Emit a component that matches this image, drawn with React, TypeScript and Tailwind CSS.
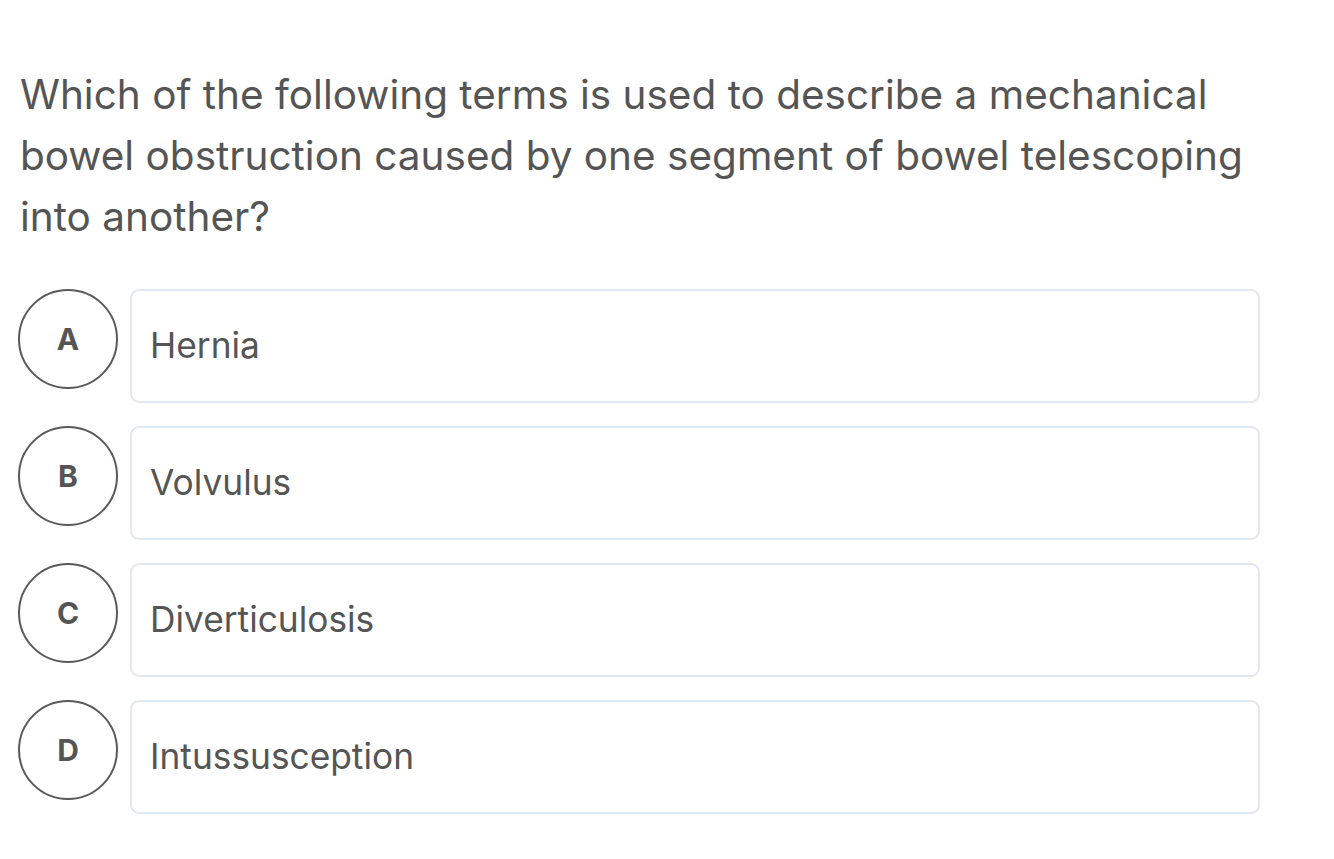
const options = [
  { letter: "A", text: "Hernia" },
  { letter: "B", text: "Volvulus" },
  { letter: "C", text: "Diverticulosis" },
  { letter: "D", text: "Intussusception" },
];

export default function App() {
  return (
    <div className="min-h-[859px] w-[1334px] bg-white font-['Inter',sans-serif] text-[#555555]">
      <div className="pl-[18px] pr-[74px] pt-[64px]">
        <p className="pl-[2px] text-[40.5px] leading-[61px]">
          Which of the following terms is used to describe a mechanical bowel
          obstruction caused by one segment of bowel telescoping into another?
        </p>
        <div className="mt-[42px] flex flex-col gap-[23px]">
          {options.map((o) => (
            <div key={o.letter} className="flex items-start gap-[12px]">
              <div className="flex h-[100px] w-[100px] shrink-0 items-center justify-center rounded-full border-2 border-[#5a5a5a] text-[30px] font-bold text-[#555555]">
                {o.letter}
              </div>
              <div className="flex h-[114px] flex-1 items-center rounded-[9px] border-2 border-[#e0e8f2] px-[18px] text-[35.3px]">
                {o.text}
              </div>
            </div>
          ))}
        </div>
      </div>
    </div>
  );
}
